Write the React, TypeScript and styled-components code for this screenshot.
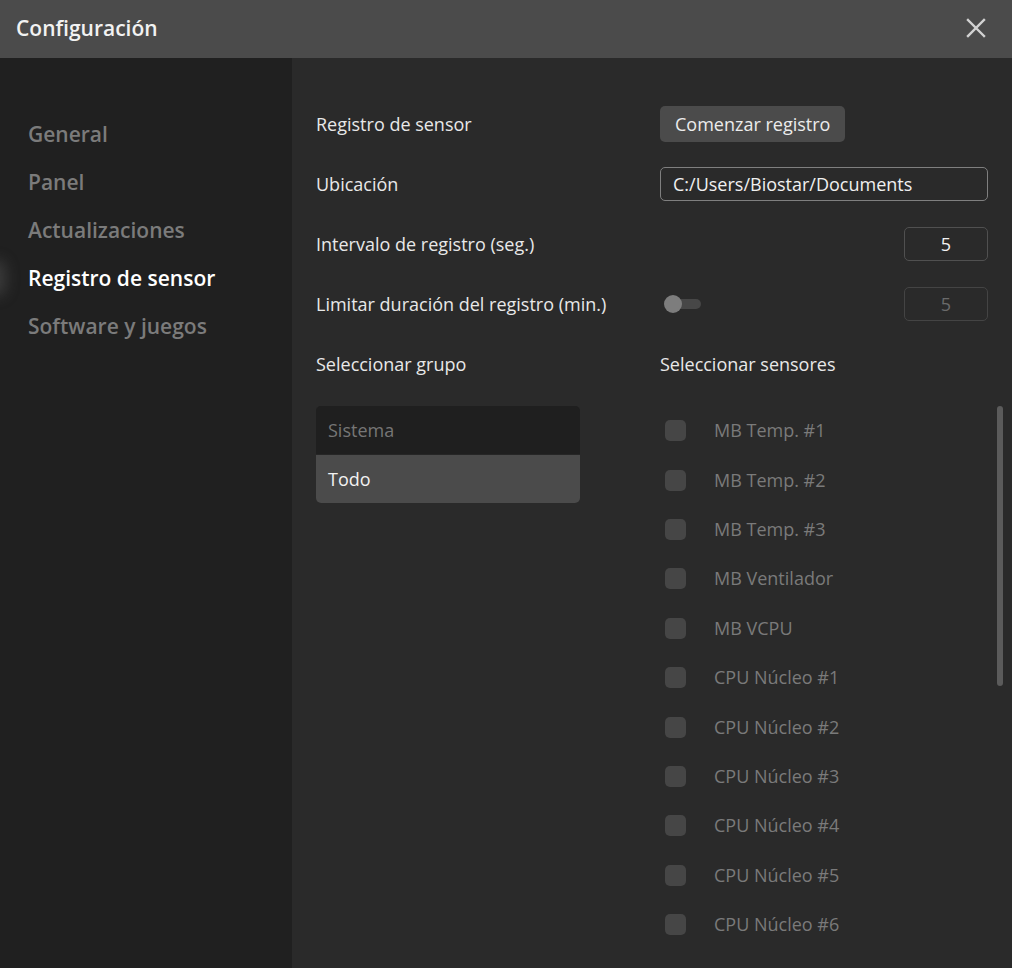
import React from "react";
import styled, { createGlobalStyle } from "styled-components";

const GlobalStyle = createGlobalStyle`
  html, body {
    margin: 0;
    padding: 0;
    background: #2a2a2a;
  }
  body {
    font-family: "Open Sans", "Noto Sans", sans-serif;
    -webkit-font-smoothing: antialiased;
  }
  * { box-sizing: border-box; }
`;

const Window = styled.div`
  width: 1012px;
  height: 968px;
  display: flex;
  flex-direction: column;
  overflow: hidden;
  background: #2a2a2a;
`;

const TitleBar = styled.header`
  height: 58px;
  flex: none;
  display: flex;
  align-items: center;
  justify-content: space-between;
  padding: 0 24px 2px 16px;
  background: #4b4b4b;
`;

const Title = styled.h1`
  margin: 0;
  font-size: 21px;
  font-weight: 600;
  color: #f2f2f2;
  letter-spacing: 0;
`;

const CloseButton = styled.button`
  width: 24px;
  height: 24px;
  padding: 0;
  border: none;
  background: transparent;
  display: flex;
  align-items: center;
  justify-content: center;
  cursor: pointer;
`;

const Body = styled.div`
  flex: 1;
  display: grid;
  grid-template-columns: 292px 1fr;
  min-height: 0;
`;

const Sidebar = styled.nav`
  background: #202020;
  padding-top: 52px;
  display: flex;
  flex-direction: column;
`;

const NavItem = styled.div<{ $active?: boolean }>`
  position: relative;
  height: 48px;
  line-height: 48px;
  padding-left: 28px;
  font-size: 21px;
  font-weight: 600;
  color: ${(p) => (p.$active ? "#ffffff" : "#7b7b7b")};
  white-space: nowrap;
`;

const ActiveGlow = styled.span`
  position: absolute;
  left: -8px;
  top: 14px;
  width: 6px;
  height: 20px;
  border-radius: 3px;
  background: rgba(110, 110, 110, 0.5);
  box-shadow: 0 0 14px 8px rgba(90, 90, 90, 0.45);
`;

const Content = styled.main`
  padding: 36px 24px 0 24px;
  display: flex;
  flex-direction: column;
  min-height: 0;
`;

const Row = styled.div`
  height: 60px;
  display: grid;
  grid-template-columns: 344px 1fr;
  align-items: center;
`;

const Label = styled.span`
  font-size: 18px;
  line-height: 24px;
  margin-top: -1px;
  color: #e8e8e8;
  white-space: nowrap;
`;

const Control = styled.div<{ $justify?: string }>`
  display: flex;
  align-items: center;
  justify-content: ${(p) => p.$justify || "flex-start"};
`;

const PrimaryButton = styled.button`
  height: 36px;
  padding: 0 15px 1px;
  border: none;
  border-radius: 5px;
  background: #4b4b4b;
  color: #ececec;
  font-family: inherit;
  font-size: 18px;
  cursor: pointer;
`;

const PathField = styled.div`
  width: 100%;
  height: 34px;
  display: flex;
  align-items: center;
  padding: 0 12px 1px;
  border: 1px solid #7f7f7f;
  border-radius: 5px;
  color: #f0f0f0;
  font-size: 18px;
`;

const NumberField = styled.div<{ $disabled?: boolean }>`
  width: 84px;
  height: 34px;
  display: flex;
  align-items: center;
  justify-content: center;
  padding-bottom: 1px;
  border: 1px solid ${(p) => (p.$disabled ? "#444444" : "#505050")};
  border-radius: 5px;
  color: ${(p) => (p.$disabled ? "#6a6a6a" : "#f2f2f2")};
  font-size: 18px;
`;

const LimitControl = styled(Control)`
  justify-content: space-between;
  padding-left: 4px;
`;

const Toggle = styled.div`
  position: relative;
  width: 37px;
  height: 18px;
  display: flex;
  align-items: center;
`;

const ToggleTrack = styled.div`
  width: 36px;
  height: 10px;
  margin-left: 1px;
  border-radius: 5px;
  background: #474747;
`;

const ToggleKnob = styled.div`
  position: absolute;
  left: 0;
  top: 0;
  width: 18px;
  height: 18px;
  border-radius: 50%;
  background: #7d7d7d;
`;

const Columns = styled.div`
  flex: 1;
  display: grid;
  grid-template-columns: 344px 1fr;
  margin-top: 12px;
  min-height: 0;
`;

const GroupList = styled.div`
  width: 264px;
  align-self: start;
  display: flex;
  flex-direction: column;
  gap: 1px;
  border-radius: 5px;
  overflow: hidden;
  background: #262626;
`;

const GroupItem = styled.div<{ $selected?: boolean }>`
  height: 48px;
  display: flex;
  align-items: center;
  padding: 0 0 1px 12px;
  font-size: 18px;
  background: ${(p) => (p.$selected ? "#4b4b4b" : "#1f1f1f")};
  color: ${(p) => (p.$selected ? "#f2f2f2" : "#767676")};
`;

const SensorPane = styled.div`
  position: relative;
  min-height: 0;
`;

const SensorList = styled.div`
  display: flex;
  flex-direction: column;
`;

const SensorRow = styled.label`
  height: 49.4px;
  display: flex;
  align-items: center;
  padding-left: 5px;
  gap: 28px;
  font-size: 18px;
  color: #7a7a7a;
  white-space: nowrap;
`;

const SensorName = styled.span`
  margin-top: -1px;
`;

const CheckBox = styled.span`
  width: 21px;
  height: 21px;
  flex: none;
  border-radius: 5px;
  background: #464646;
`;

const ScrollThumb = styled.div`
  position: absolute;
  right: -15px;
  top: 0;
  width: 6px;
  height: 280px;
  border-radius: 3px;
  background: #5b5b5b;
`;

const navItems = [
  "General",
  "Panel",
  "Actualizaciones",
  "Registro de sensor",
  "Software y juegos",
];

const sensors = [
  "MB Temp. #1",
  "MB Temp. #2",
  "MB Temp. #3",
  "MB Ventilador",
  "MB VCPU",
  "CPU Núcleo #1",
  "CPU Núcleo #2",
  "CPU Núcleo #3",
  "CPU Núcleo #4",
  "CPU Núcleo #5",
  "CPU Núcleo #6",
];

const CloseIcon = () => (
  <svg width="20" height="20" viewBox="0 0 20 20" fill="none">
    <path
      d="M2 2 L18 18 M18 2 L2 18"
      stroke="#d2d2d2"
      strokeWidth="2.4"
      strokeLinecap="square"
    />
  </svg>
);

export default function App() {
  const activeNav = "Registro de sensor";
  return (
    <>
      <GlobalStyle />
      <Window>
        <TitleBar>
          <Title>Configuración</Title>
          <CloseButton aria-label="Cerrar">
            <CloseIcon />
          </CloseButton>
        </TitleBar>
        <Body>
          <Sidebar>
            {navItems.map((item) => (
              <NavItem key={item} $active={item === activeNav}>
                {item === activeNav && <ActiveGlow />}
                {item}
              </NavItem>
            ))}
          </Sidebar>
          <Content>
            <Row>
              <Label>Registro de sensor</Label>
              <Control>
                <PrimaryButton>Comenzar registro</PrimaryButton>
              </Control>
            </Row>
            <Row>
              <Label>Ubicación</Label>
              <Control>
                <PathField>C:/Users/Biostar/Documents</PathField>
              </Control>
            </Row>
            <Row>
              <Label>Intervalo de registro (seg.)</Label>
              <Control $justify="flex-end">
                <NumberField>5</NumberField>
              </Control>
            </Row>
            <Row>
              <Label>Limitar duración del registro (min.)</Label>
              <LimitControl>
                <Toggle>
                  <ToggleTrack />
                  <ToggleKnob />
                </Toggle>
                <NumberField $disabled>5</NumberField>
              </LimitControl>
            </Row>
            <Row>
              <Label>Seleccionar grupo</Label>
              <Label>Seleccionar sensores</Label>
            </Row>
            <Columns>
              <div>
                <GroupList>
                  <GroupItem>Sistema</GroupItem>
                  <GroupItem $selected>Todo</GroupItem>
                </GroupList>
              </div>
              <SensorPane>
                <SensorList>
                  {sensors.map((s) => (
                    <SensorRow key={s}>
                      <CheckBox />
                      <SensorName>{s}</SensorName>
                    </SensorRow>
                  ))}
                </SensorList>
                <ScrollThumb />
              </SensorPane>
            </Columns>
          </Content>
        </Body>
      </Window>
    </>
  );
}
